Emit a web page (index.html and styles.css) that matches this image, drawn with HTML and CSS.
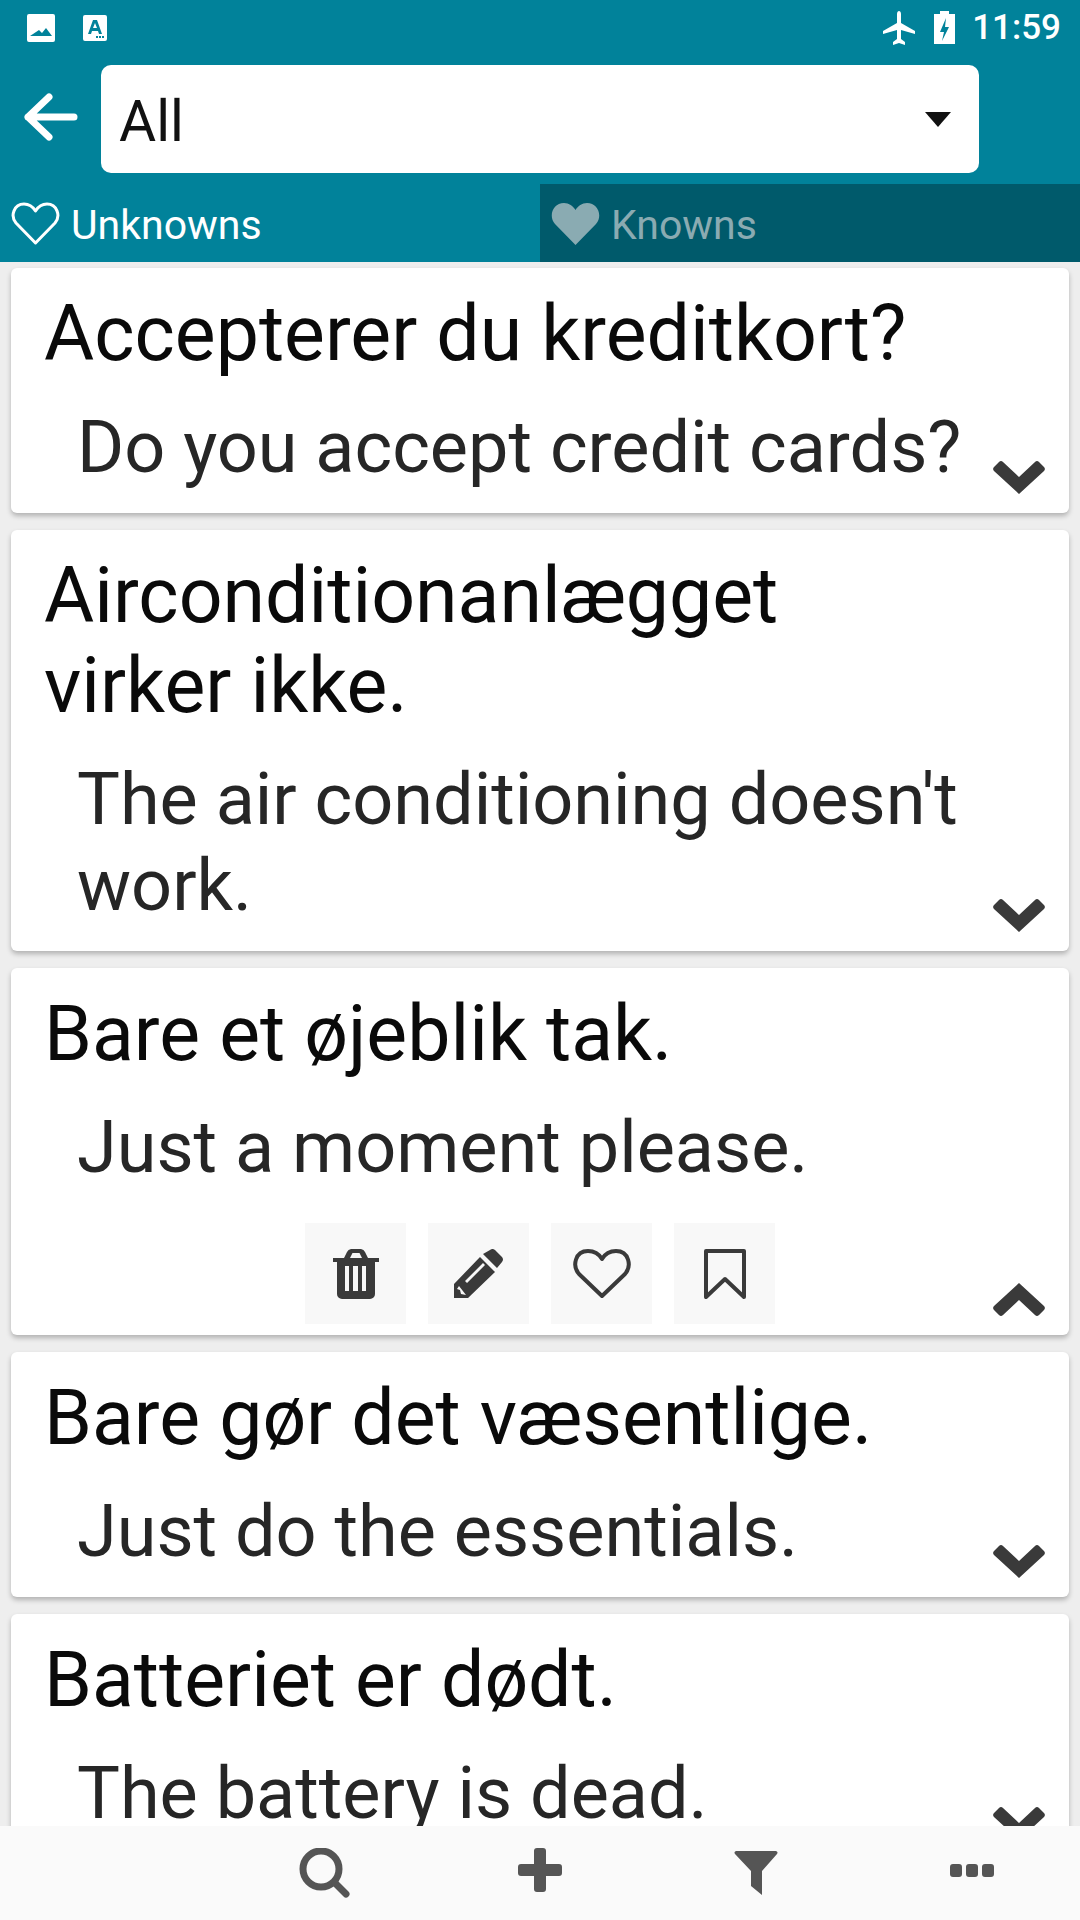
FILE: index.html
```html
<!DOCTYPE html>
<html lang="en">
<head>
    <meta charset="UTF-8">
    <meta name="viewport" content="width=device-width, initial-scale=1.0">
    <title>Phrases</title>
    <link rel="stylesheet" href="styles.css">
</head>
<body>
    <header class="top">
        <div class="status-bar">
            <div class="status-left">
                <svg class="icon-image" viewBox="0 0 28 28"><path fill="#fff" fill-rule="evenodd" d="M2 0h24a2 2 0 0 1 2 2v24a2 2 0 0 1-2 2H2a2 2 0 0 1-2-2V2a2 2 0 0 1 2-2zM3 22h22l-6-8-4 5-3-3z"/></svg>
                <svg class="icon-store" viewBox="0 0 24 26"><path fill="#fff" fill-rule="evenodd" d="M2 0h20a2 2 0 0 1 2 2v22a2 2 0 0 1-2 2H2a2 2 0 0 1-2-2V2a2 2 0 0 1 2-2zM10 5l-5 14h3l1-3h6l1 3h3L14 5zM10 13l2-5 2 5zM13 21v2h2v-2zM16 21v2h2v-2zM19 21v2h2v-2z"/></svg>
            </div>
            <div class="status-right">
                <svg class="icon-plane" viewBox="0 0 32 34"><path fill="#fff" d="M14 3c0-4 4-4 4 0v9l14 8v3l-14-4v9l4 3v3l-6-2-6 2v-3l4-3v-9L0 23v-3l14-8z"/></svg>
                <svg class="icon-battery" viewBox="0 0 21 33"><path fill="#fff" fill-rule="evenodd" d="M6 0h9v3h6v30H0V3h6zM12 7l-6 14h4l-2 9 7-14h-4z"/></svg>
                <span class="time">11:59</span>
            </div>
        </div>
        <div class="toolbar">
            <svg class="icon-back" viewBox="0 0 54 48"><path fill="none" stroke="#fff" stroke-width="7" stroke-linecap="round" stroke-linejoin="round" d="M25 4 4 24l21 20M4 24h46"/></svg>
            <div class="select">
                <span class="select-text">All</span>
                <svg class="icon-caret" viewBox="0 0 26 15"><path fill="#111" d="M0 0h26L13 15z"/></svg>
            </div>
        </div>
        <div class="tabs">
            <div class="tab">
                <svg class="icon-heart" viewBox="0 0 49 43"><path fill="none" stroke="#fff" stroke-width="3" stroke-linejoin="round" d="M24.500 41 5 21C-1 14 3 2 13 2c5 0 9 3 11.500 7C27 5 31 2 36 2c10 0 14 12 8 19z"/></svg>
                <span>Unknowns</span>
            </div>
            <div class="tab tab-off">
                <svg class="icon-heart" viewBox="0 0 49 43"><path fill="#8aabb2" d="M24.500 43 4 22C-3 14 2 1 13 1c5 0 9 3 11.500 7C27 4 31 1 36 1c11 0 16 13 9 21z"/></svg>
                <span>Knowns</span>
            </div>
        </div>
    </header>

    <main class="list">
        <div class="card">
            <div class="phrase">Accepterer du kreditkort?</div>
            <div class="meaning">Do you accept credit cards?</div>
            <svg class="chevron" viewBox="0 0 52 33"><path fill="#3a3a3a" d="M26 33 1 10a3 3 0 0 1 0-4l5-5a3 3 0 0 1 4 0l16 15L42 1a3 3 0 0 1 4 0l5 5a3 3 0 0 1 0 4z"/></svg>
        </div>
        <div class="card">
            <div class="phrase">Airconditionanlægget virker ikke.</div>
            <div class="meaning">The air conditioning doesn't work.</div>
            <svg class="chevron" viewBox="0 0 52 33"><path fill="#3a3a3a" d="M26 33 1 10a3 3 0 0 1 0-4l5-5a3 3 0 0 1 4 0l16 15L42 1a3 3 0 0 1 4 0l5 5a3 3 0 0 1 0 4z"/></svg>
        </div>
        <div class="card">
            <div class="phrase">Bare et øjeblik tak.</div>
            <div class="meaning">Just a moment please.</div>
            <div class="actions">
                <button class="action">
                    <svg viewBox="0 0 46 50" width="46" height="50"><path fill="#3a3a3a" fill-rule="evenodd" d="M11 9l3-6a5 5 0 0 1 4-3h10a5 5 0 0 1 4 3l3 6h11v4H42v32a5 5 0 0 1-5 5H9a5 5 0 0 1-5-5V13H0V9zM17 9h12l-2-4a1 1 0 0 0-1-1h-6a1 1 0 0 0-1 1zM12 17v25h4V17zM20 17v25h5V17zM29 17v25h4V17z"/></svg>
                </button>
                <button class="action">
                    <svg viewBox="0 0 49 49" width="49" height="49"><path fill="#3a3a3a" fill-rule="evenodd" d="M36 1a4 4 0 0 1 5 0l7 7a4 4 0 0 1 0 5l-5 6-14-14zM26 8l15 15-27 26H0V35zM29 14l2 2-18 18-2-2zM5 37l-2 3 3 1 1 4 5 1z"/></svg>
                </button>
                <button class="action">
                    <svg viewBox="0 0 58 50" width="58" height="50"><path fill="none" stroke="#3a3a3a" stroke-width="4" stroke-linejoin="round" d="M29 47 6 25C-1 17 2 2 15 2c6 0 11 3 14 8 3-5 8-8 14-8 13 0 16 15 9 23z"/></svg>
                </button>
                <button class="action">
                    <svg viewBox="0 0 42 50" width="42" height="50"><path fill="none" stroke="#3a3a3a" stroke-width="4" stroke-linejoin="round" d="M2 2h38v46L21 30 2 48z"/></svg>
                </button>
            </div>
            <svg class="chevron" viewBox="0 0 52 33"><path fill="#3a3a3a" d="M26 0 51 23a3 3 0 0 1 0 4l-5 5a3 3 0 0 1-4 0L26 17 10 32a3 3 0 0 1-4 0l-5-5a3 3 0 0 1 0-4z"/></svg>
        </div>
        <div class="card">
            <div class="phrase">Bare gør det væsentlige.</div>
            <div class="meaning">Just do the essentials.</div>
            <svg class="chevron" viewBox="0 0 52 33"><path fill="#3a3a3a" d="M26 33 1 10a3 3 0 0 1 0-4l5-5a3 3 0 0 1 4 0l16 15L42 1a3 3 0 0 1 4 0l5 5a3 3 0 0 1 0 4z"/></svg>
        </div>
        <div class="card">
            <div class="phrase">Batteriet er dødt.</div>
            <div class="meaning">The battery is dead.</div>
            <svg class="chevron" viewBox="0 0 52 33"><path fill="#3a3a3a" d="M26 33 1 10a3 3 0 0 1 0-4l5-5a3 3 0 0 1 4 0l16 15L42 1a3 3 0 0 1 4 0l5 5a3 3 0 0 1 0 4z"/></svg>
        </div>
    </main>

    <footer class="bottom-bar">
        <div></div>
        <svg viewBox="0 0 52 50" width="52" height="50"><g fill="none" stroke="#555" stroke-width="7" stroke-linecap="round"><circle cx="23" cy="21" r="18"/><path d="M37 35l11 11"/></g></svg>
        <svg class="bar-raised" viewBox="0 0 44 44" width="44" height="44"><path fill="#555" d="M16 3a3 3 0 0 1 3-3h6a3 3 0 0 1 3 3v13h13a3 3 0 0 1 3 3v6a3 3 0 0 1-3 3H28v13a3 3 0 0 1-3 3h-6a3 3 0 0 1-3-3V28H3a3 3 0 0 1-3-3v-6a3 3 0 0 1 3-3h13z"/></svg>
        <svg viewBox="0 0 44 44" width="44" height="44"><path fill="#555" d="M2 0h40a2 2 0 0 1 1 3L28 20v24l-11-9V20L1 3a2 2 0 0 1 1-3z"/></svg>
        <svg class="bar-raised" viewBox="0 0 44 13" width="44" height="13"><path fill="#555" d="M3 0h6a3 3 0 0 1 3 3v7a3 3 0 0 1-3 3H3a3 3 0 0 1-3-3V3a3 3 0 0 1 3-3zM19 0h6a3 3 0 0 1 3 3v7a3 3 0 0 1-3 3h-6a3 3 0 0 1-3-3V3a3 3 0 0 1 3-3zM35 0h6a3 3 0 0 1 3 3v7a3 3 0 0 1-3 3h-6a3 3 0 0 1-3-3V3a3 3 0 0 1 3-3z"/></svg>
    </footer>
</body>
</html>
```

FILE: styles.css
```css
html, body {
    margin: 0;
    height: 1920px;
}
body {
    position: relative;
    overflow: hidden;
    background-color: #eeeeee;
    font-family: Roboto, sans-serif;
}
.top {
    background-color: #01829a;
    color: white;
}
.status-bar {
    height: 55px;
    display: flex;
    justify-content: space-between;
    align-items: center;
    padding: 0 19px 0 27px;
}
.status-left, .status-right {
    display: flex;
    align-items: center;
}
.icon-image {
    width: 28px;
    height: 28px;
    margin-right: 28px;
}
.icon-store {
    width: 24px;
    height: 26px;
}
.icon-plane {
    width: 32px;
    height: 34px;
    margin-right: 19px;
}
.icon-battery {
    width: 21px;
    height: 33px;
    margin-right: 17px;
}
.time {
    font-size: 35px;
    font-weight: 500;
}
.toolbar {
    height: 129px;
    display: flex;
    align-items: flex-start;
    padding-top: 10px;
    box-sizing: border-box;
}
.icon-back {
    width: 54px;
    height: 48px;
    margin: 28px 23px 0 24px;
}
.select {
    width: 878px;
    height: 108px;
    box-sizing: border-box;
    padding: 0 28px 0 18px;
    background-color: white;
    border-radius: 10px;
    color: #111;
    font-size: 57px;
    display: flex;
    justify-content: space-between;
    align-items: center;
}
.select-text {
    padding-top: 5px;
}
.icon-caret {
    width: 26px;
    height: 15px;
}
.tabs {
    display: flex;
    height: 78px;
}
.tab {
    width: 540px;
    display: flex;
    align-items: center;
    padding-left: 11px;
    box-sizing: border-box;
    font-size: 41px;
}
.tab span {
    margin-left: 11px;
    padding-top: 3px;
}
.tab-off {
    background-color: #005a6b;
    color: #8aabb2;
}
.icon-heart {
    width: 49px;
    height: 43px;
}
.list {
    padding: 6px 11px 0;
}
.card {
    position: relative;
    background-color: white;
    border-radius: 6px;
    box-shadow: 0 3px 5px rgba(0,0,0,0.25);
    margin-bottom: 17px;
    padding: 21px 100px 22.500px 33px;
}
.phrase {
    font-size: 77px;
    line-height: 90px;
    color: #0a0a0a;
    margin-bottom: 26px;
}
.meaning {
    font-size: 72px;
    line-height: 85.500px;
    color: #262626;
    padding-left: 33px;
}
.actions {
    display: flex;
    justify-content: center;
    gap: 22px;
    margin: 33px -100px -12px -33px;
}
.action {
    width: 101px;
    height: 101px;
    padding: 0;
    border: none;
    background-color: #f8f8f8;
    display: flex;
    justify-content: center;
    align-items: center;
}
.chevron {
    position: absolute;
    right: 24px;
    bottom: 19px;
    width: 52px;
    height: 33px;
}
.bottom-bar {
    position: absolute;
    left: 0;
    right: 0;
    bottom: 0;
    height: 94px;
    background-color: #fafafa;
    display: grid;
    grid-template-columns: repeat(5, 216px);
    justify-items: center;
    align-items: center;
}
.bar-raised {
    margin-top: -6px;
}
```
